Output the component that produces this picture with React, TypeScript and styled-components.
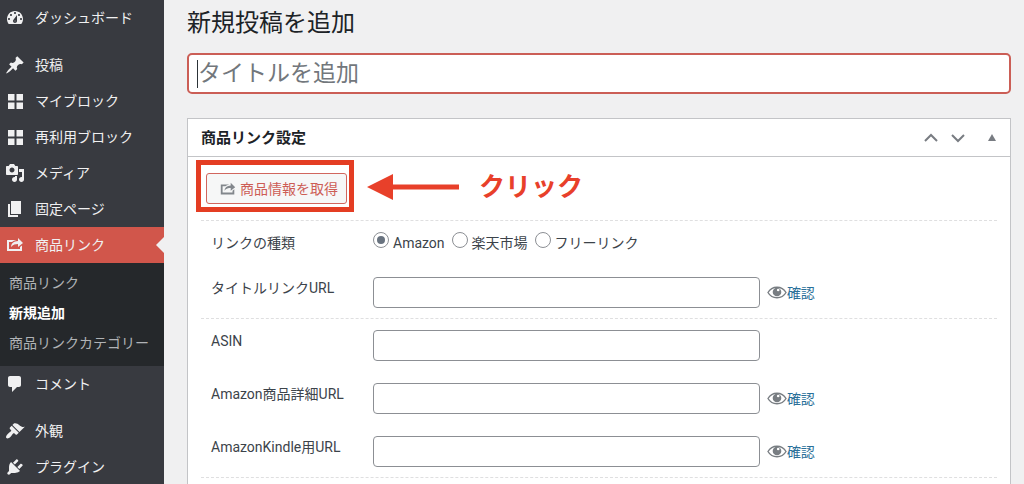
import React from "react";
import styled, { createGlobalStyle } from "styled-components";

const GlobalStyle = createGlobalStyle`
  *, *::before, *::after { box-sizing: border-box; }
  body {
    margin: 0;
    background: #f0f0f1;
    color: #3c434a;
    font-family: Roboto, "Noto Sans CJK JP", sans-serif;
    font-size: 14px;
    line-height: 22px;
  }
  button, input { font: inherit; color: inherit; }
  ul { margin: 0; padding: 0; list-style: none; }
  a { text-decoration: none; }
`;

const Shell = styled.div`
  display: flex;
  height: 100vh;
  overflow: hidden;
`;

const Sidebar = styled.nav`
  flex: 0 0 164px;
  background: #383a40;
  overflow: hidden;
`;

const MenuGroup = styled.ul`
  & + & { margin-top: 11px; }
`;

const MenuLink = styled.a<{ $active?: boolean }>`
  position: relative;
  display: flex;
  align-items: center;
  gap: 10px;
  height: 36px;
  padding-left: 5px;
  color: #f0f0f1;
  background: ${(p) => (p.$active ? "#d1564b" : "transparent")};

  &::after {
    content: "";
    display: ${(p) => (p.$active ? "block" : "none")};
    position: absolute;
    top: 10px;
    right: 0;
    border: 8px solid transparent;
    border-left-width: 0;
    border-right-color: #f0f0f1;
  }
`;

const Submenu = styled.ul`
  padding: 5px 0 8px;
  background: #25282b;
`;

const SubmenuLink = styled.a<{ $current?: boolean }>`
  display: block;
  padding-left: 9px;
  line-height: 30px;
  color: ${(p) => (p.$current ? "#ffffff" : "#b0b3b6")};
  font-weight: ${(p) => (p.$current ? 700 : 400)};
`;

const Main = styled.main`
  flex: 1;
  min-width: 0;
  padding: 5px 13px 0 23px;
  overflow: hidden;
`;

const PageTitle = styled.h1`
  margin: 0 0 12px;
  font-size: 24px;
  font-weight: 400;
  line-height: 36px;
  color: #1d2327;
`;

const TitleField = styled.div`
  display: flex;
  align-items: center;
  height: 41px;
  margin-bottom: 24px;
  padding-left: 8px;
  border: 2px solid #cb5e56;
  border-radius: 5px;
  background: #fff;
`;

const Caret = styled.span`
  flex: 0 0 1px;
  height: 28px;
  background: #2c3338;
`;

const TitleInput = styled.input`
  flex: 1;
  min-width: 0;
  height: 36px;
  padding: 0;
  border: 0;
  outline: 0;
  background: transparent;
  font-size: 23px;
  &::placeholder { color: #72777c; opacity: 1; }
`;

const Panel = styled.section`
  border: 1px solid #c3c4c7;
  background: #fff;
`;

const PanelHeader = styled.header`
  display: flex;
  align-items: center;
  height: 38px;
  padding: 0 9px 0 13px;
  border-bottom: 1px solid #c3c4c7;
`;

const PanelTitle = styled.h2`
  flex: 1;
  margin: 0;
  font-size: 15px;
  line-height: 22px;
  color: #1d2327;
`;

const HeaderButton = styled.button<{ $spaced?: boolean }>`
  display: grid;
  place-items: center;
  width: ${(p) => (p.$spaced ? "30px" : "27px")};
  height: 36px;
  padding: ${(p) => (p.$spaced ? "0 0 0 12px" : "0")};
  border: 0;
  background: none;
  color: #787c82;
`;

const PanelBody = styled.div`
  padding: 0 13px 24px;
`;

const Section = styled.div`
  display: flex;
  flex-direction: column;
  gap: 1px;
  border-bottom: 1px dashed #dfdfe0;
`;

const Actions = styled(Section)`
  flex-direction: row;
  align-items: center;
  gap: 20px;
  padding: 16px 5px;
`;

const Highlight = styled.div`
  position: relative;
  &::after {
    content: "";
    position: absolute;
    inset: -13px -7px -8px -10px;
    border: 5px solid #e43d23;
    pointer-events: none;
  }
`;

const FetchButton = styled.button`
  display: flex;
  align-items: center;
  gap: 3px;
  height: 31px;
  padding: 0 8px 0 12px;
  border: 1px solid #d1665e;
  border-radius: 3px;
  background: #f6f7f7;
  color: #cd5d55;
  white-space: nowrap;
`;

const Callout = styled.div`
  display: flex;
  align-items: center;
  gap: 20px;
  height: 31px;
  padding-bottom: 4px;
`;

const Note = styled.strong`
  color: #e8402a;
  font-size: 26px;
  line-height: 30px;
`;

const Row = styled.div<{ $plain?: boolean }>`
  display: grid;
  grid-template-columns: 162px 1fr;
  padding: ${(p) => (p.$plain ? "11px 0 11px 10px" : "11px 0 10px 10px")};
`;

const FieldLabel = styled.label`
  line-height: 22px;
`;

const FieldCell = styled.div`
  display: flex;
  align-items: center;
  gap: 7px;
`;

const TextInput = styled.input`
  width: 62%;
  height: 31px;
  padding: 0 8px;
  border: 1px solid #8c8f94;
  border-radius: 4px;
  background: #fff;
`;

const PreviewLink = styled.a`
  display: flex;
  align-items: center;
  color: #2a7099;
`;

const RadioLabel = styled.label`
  display: flex;
  align-items: flex-start;
  gap: 4px;
`;

const Radio = styled.input`
  appearance: none;
  display: grid;
  place-items: center;
  width: 16px;
  height: 16px;
  margin: 0;
  border: 1px solid #8c8f94;
  border-radius: 50%;
  background: #fff;
  &:checked::before {
    content: "";
    width: 8px;
    height: 8px;
    border-radius: 50%;
    background: #69737f;
  }
`;

const icons = {
  dashboard:
    "M3.76 16h12.48c1.1-1.37 1.76-3.11 1.76-5 0-4.42-3.58-8-8-8s-8 3.58-8 8c0 1.89.66 3.63 1.76 5zM10 4c.55 0 1 .45 1 1s-.45 1-1 1-1-.45-1-1 .45-1 1-1zM6 6c.55 0 1 .45 1 1s-.45 1-1 1-1-.45-1-1 .45-1 1-1zm8 0c.55 0 1 .45 1 1s-.45 1-1 1-1-.45-1-1 .45-1 1-1zm-5.37 5.55L12 7v6c0 1.1-.9 2-2 2s-2-.9-2-2c0-.57.24-1.08.63-1.45zM4 10c.55 0 1 .45 1 1s-.45 1-1 1-1-.45-1-1 .45-1 1-1zm12 0c.55 0 1 .45 1 1s-.45 1-1 1-1-.45-1-1 .45-1 1-1zm-6 2.5c-.28 0-.5.22-.5.5s.22.5.5.5.5-.22.5-.5-.22-.5-.5-.5z",
  post: "M10.44 3.02l1.82-1.82 6.36 6.35-1.83 1.82c-1.05-.68-2.48-.57-3.41.36l-.75.75c-.92.93-1.04 2.35-.35 3.41l-1.83 1.82-2.41-2.41-2.8 2.79c-.42.42-3.38 2.71-3.8 2.29s1.86-3.39 2.28-3.81l2.79-2.79L4.1 9.36l1.83-1.82c1.05.69 2.48.57 3.4-.36l.75-.75c.93-.92 1.05-2.35.36-3.41z",
  grid: "M3 3h6.500v6.500H3zM11.500 3h6.500v6.500h-6.500zM3 11.500h6.500v6.500H3zM11.500 11.500h6.500v6.500h-6.500z",
  media:
    "M13 11V4c0-.55-.45-1-1-1h-1.67L9 1H5L3.67 3H2c-.55 0-1 .45-1 1v7c0 .55.45 1 1 1h10c.55 0 1-.45 1-1zM7 4.5c1.38 0 2.5 1.12 2.5 2.5S8.38 9.5 7 9.5 4.5 8.38 4.5 7 5.62 4.5 7 4.5zM14 6h5v10.5c0 1.38-1.12 2.5-2.5 2.5S14 17.88 14 16.500s1.120-2.500 2.500-2.500c.17 0 .34.02.5.05V9h-3V6zm-4 8.050V13h2v3.500c0 1.380-1.120 2.500-2.500 2.500S7 17.880 7 16.500 8.120 14 9.500 14c.17 0 .34.02.5.05z",
  page: "M6 15V2h10v13H6zm-1 1h8v2H3V5h2v11z",
  share:
    "M18 8l-5 4V9.01c-2.58.06-4.88.45-7 2.99.29-3.57 2.66-5.66 7-5.94V3zM4 14h11v-2l2-1.6V16H2V5h9.43c-1.83.32-3.31 1-4.41 2H4v7z",
  comment:
    "M5 2h9c1.1 0 2 .9 2 2v7c0 1.1-.9 2-2 2h-2l-5 5v-5H5c-1.1 0-2-.9-2-2V4c0-1.1.9-2 2-2z",
  appearance:
    "M14.48 11.06L7.41 3.99l1.5-1.5c.5-.56 2.3-.47 3.51.32 1.21.8 1.43 1.28 2.91 2.1 1.18.64 2.45 1.26 4.45.85zm-.71.71L6.7 4.7 4.93 6.47c-.39.39-.39 1.02 0 1.41l1.06 1.06c.39.39.39 1.03 0 1.42-.6.6-1.43 1.11-2.21 1.69-.35.26-.7.53-1.01.84C1.43 14.23.4 16.08 1.4 17.07c.99 1 2.84-.03 4.18-1.36.31-.31.58-.66.85-1.02.57-.78 1.08-1.61 1.69-2.21.39-.39 1.02-.39 1.41 0l1.06 1.06c.39.39 1.02.39 1.41 0z",
  plugins:
    "M13.11 4.36L9.87 7.6 8 5.73l3.24-3.24c.35-.34 1.05-.2 1.56.32.52.51.66 1.21.31 1.55zm-8 1.77l.91-1.12 9.01 9.01-1.19.84c-.71.71-2.63 1.16-3.82 1.16H6.14L4.9 17.26c-.59.59-1.54.59-2.12 0-.59-.58-.59-1.53 0-2.12l1.24-1.24v-3.88c0-1.13.4-3.19 1.09-3.89zm7.26 3.97l3.24-3.24c.34-.35 1.04-.21 1.55.31.52.51.66 1.21.31 1.55l-3.24 3.25z",
};

type IconName = keyof typeof icons;

const Icon = ({ name, size = 20, color = "#f0f0f1" }: { name: IconName; size?: number; color?: string }) => (
  <svg width={size} height={size} viewBox="0 0 20 20" fill={color} fillRule="evenodd" aria-hidden="true">
    <path d={icons[name]} />
  </svg>
);

const EyeIcon = () => (
  <svg width="20" height="20" viewBox="0 0 20 20" aria-hidden="true">
    <path d="M1 9.500C5 2.500 15 2.500 19 9.500C15 16.500 5 16.500 1 9.500z" fill="#fff" stroke="#787d82" strokeWidth="1.400" />
    <circle cx="10" cy="9" r="4.300" fill="#787d82" />
    <circle cx="11.200" cy="7" r="1.300" fill="#fff" />
  </svg>
);

const Chevron = ({ down }: { down?: boolean }) => (
  <svg width="16" height="10" viewBox="0 0 16 10" fill="none" stroke="currentColor" strokeWidth="2" aria-hidden="true">
    <path d={down ? "M2 2l6 6 6-6" : "M2 8l6-6 6 6"} />
  </svg>
);

type Item = { icon: IconName; text: string; active?: boolean };

const groups: Item[][] = [
  [{ icon: "dashboard", text: "ダッシュボード" }],
  [
    { icon: "post", text: "投稿" },
    { icon: "grid", text: "マイブロック" },
    { icon: "grid", text: "再利用ブロック" },
    { icon: "media", text: "メディア" },
    { icon: "page", text: "固定ページ" },
    { icon: "share", text: "商品リンク", active: true },
    { icon: "comment", text: "コメント" },
  ],
  [
    { icon: "appearance", text: "外観" },
    { icon: "plugins", text: "プラグイン" },
  ],
];

const submenu = ["商品リンク", "新規追加", "商品リンクカテゴリー"];

const UrlRow = ({ id, label, preview }: { id: string; label: string; preview?: boolean }) => (
  <Row>
    <FieldLabel htmlFor={id}>{label}</FieldLabel>
    <FieldCell>
      <TextInput id={id} type="text" />
      {preview && (
        <PreviewLink href="#">
          <EyeIcon />
          確認
        </PreviewLink>
      )}
    </FieldCell>
  </Row>
);

export default function App() {
  return (
    <>
      <GlobalStyle />
      <Shell>
        <Sidebar>
          {groups.map((items, i) => (
            <MenuGroup key={i}>
              {items.map((item) => (
                <li key={item.text}>
                  <MenuLink href="#" $active={item.active}>
                    <Icon name={item.icon} />
                    {item.text}
                  </MenuLink>
                  {item.active && (
                    <Submenu>
                      {submenu.map((text) => (
                        <li key={text}>
                          <SubmenuLink href="#" $current={text === "新規追加"}>
                            {text}
                          </SubmenuLink>
                        </li>
                      ))}
                    </Submenu>
                  )}
                </li>
              ))}
            </MenuGroup>
          ))}
        </Sidebar>
        <Main>
          <PageTitle>新規投稿を追加</PageTitle>
          <TitleField>
            <Caret />
            <TitleInput type="text" aria-label="タイトルを追加" placeholder="タイトルを追加" />
          </TitleField>
          <Panel>
            <PanelHeader>
              <PanelTitle>商品リンク設定</PanelTitle>
              <HeaderButton type="button" aria-label="上に移動">
                <Chevron />
              </HeaderButton>
              <HeaderButton type="button" aria-label="下に移動">
                <Chevron down />
              </HeaderButton>
              <HeaderButton type="button" aria-label="パネルを閉じる" $spaced>
                <svg width="8" height="7" viewBox="0 0 8 7" fill="currentColor" aria-hidden="true">
                  <path d="M4 0l4 7H0z" />
                </svg>
              </HeaderButton>
            </PanelHeader>
            <PanelBody>
              <Actions>
                <Highlight>
                  <FetchButton type="button">
                    <Icon name="share" size={18} color="#82878c" />
                    商品情報を取得
                  </FetchButton>
                </Highlight>
                <Callout>
                  <svg width="92" height="26" viewBox="0 0 92 26" fill="#e8402a" aria-hidden="true">
                    <path d="M0 13L26 0v10.500h66v5H26V26z" />
                  </svg>
                  <Note>クリック</Note>
                </Callout>
              </Actions>
              <Section>
                <Row $plain role="radiogroup" aria-label="リンクの種類">
                  <span>リンクの種類</span>
                  <FieldCell>
                    <RadioLabel>
                      <Radio type="radio" name="kind" defaultChecked />
                      Amazon
                    </RadioLabel>
                    <RadioLabel>
                      <Radio type="radio" name="kind" />
                      楽天市場
                    </RadioLabel>
                    <RadioLabel>
                      <Radio type="radio" name="kind" />
                      フリーリンク
                    </RadioLabel>
                  </FieldCell>
                </Row>
                <UrlRow id="title-url" label="タイトルリンクURL" preview />
              </Section>
              <Section>
                <UrlRow id="asin" label="ASIN" />
                <UrlRow id="amazon-url" label="Amazon商品詳細URL" preview />
                <UrlRow id="kindle-url" label="AmazonKindle用URL" preview />
              </Section>
            </PanelBody>
          </Panel>
        </Main>
      </Shell>
    </>
  );
}
